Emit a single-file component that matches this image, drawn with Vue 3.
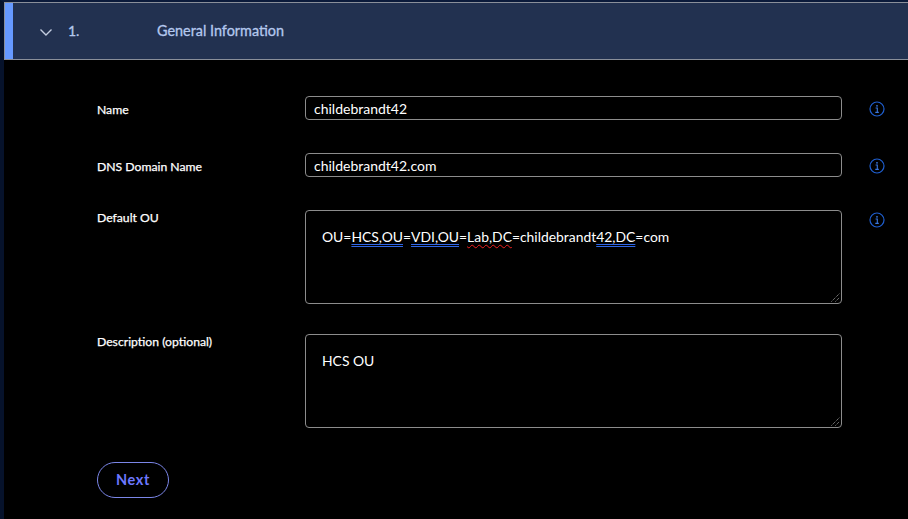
<script setup>
const rows = [
  { label: 'Name', value: 'childebrandt42', info: true },
  { label: 'DNS Domain Name', value: 'childebrandt42.com', info: true },
]
</script>

<template>
  <div class="page">
    <header class="head">
      <div class="accent"></div>
      <svg class="chev" width="14" height="9" viewBox="0 0 14 9"><path d="M1.5 1.5 L7 7 L12.5 1.5" fill="none" stroke="#c3cde0" stroke-width="1.4"/></svg>
      <span class="num">1.</span>
      <span class="title">General Information</span>
    </header>
    <main class="form">
      <div v-for="r in rows" :key="r.label" class="row single">
        <label class="lab">{{ r.label }}</label>
        <input class="inp" :value="r.value" readonly spellcheck="false" />
        <svg class="info" width="16" height="16" viewBox="0 0 16 16"><circle cx="8" cy="8" r="7" fill="none" stroke="#1f5fd0" stroke-width="1.2"/><circle cx="8" cy="4.8" r=".9" fill="#3a78e0"/><path d="M6.6 7H8.3V11.2M6.3 11.4H9.8" fill="none" stroke="#3a78e0" stroke-width="1.1"/></svg>
      </div>
      <div class="row multi ou">
        <label class="lab top">Default OU</label>
        <div class="area">OU=<span class="blue">HCS,OU</span>=<span class="blue">VDI,OU</span>=<span class="red">Lab,DC</span>=childebrandt<span class="blue">42,DC</span>=com
          <svg class="grip" width="9" height="9" viewBox="0 0 9 9"><path d="M0.5 8.5 L8.5 .5 M4.5 8.5 L8.5 4.5" stroke="#a0a0a0" stroke-width="1" stroke-dasharray="1 1"/></svg>
        </div>
        <svg class="info" width="16" height="16" viewBox="0 0 16 16"><circle cx="8" cy="8" r="7" fill="none" stroke="#1f5fd0" stroke-width="1.2"/><circle cx="8" cy="4.8" r=".9" fill="#3a78e0"/><path d="M6.6 7H8.3V11.2M6.3 11.4H9.8" fill="none" stroke="#3a78e0" stroke-width="1.1"/></svg>
      </div>
      <div class="row multi desc">
        <label class="lab top">Description (optional)</label>
        <div class="area">HCS OU
          <svg class="grip" width="9" height="9" viewBox="0 0 9 9"><path d="M0.5 8.5 L8.5 .5 M4.5 8.5 L8.5 4.5" stroke="#a0a0a0" stroke-width="1" stroke-dasharray="1 1"/></svg>
        </div>
        <span></span>
      </div>
      <button class="next" type="button">Next</button>
    </main>
  </div>
</template>

<style>
html, body { margin: 0; background: #000; overflow: hidden; }
</style>

<style scoped>
.page {
  width: 908px;
  height: 519px;
  box-sizing: border-box;
  background: #000;
  border-left: 4px solid #06122b;
  border-top: 2px solid #0b1a3a;
  font-family: Lato, "Noto Sans", sans-serif;
  overflow: hidden;
}
.head {
  height: 58px;
  box-sizing: border-box;
  background: #223150;
  border-top: 1px solid #8a8f9a;
  border-bottom: 1px solid #8a8f9a;
  border-left: 1px solid #8a8f9a;
  display: flex;
  align-items: center;
}
.accent { width: 8px; align-self: stretch; background: #6699ff; }
.chev { margin-left: 26px; margin-top: 2px; }
.num { margin-left: 15px; width: 89px; color: #b4c8ee; font-size: 14px; -webkit-text-stroke: .3px #b4c8ee; margin-top: -2px; }
.title { color: #b4c8ee; font-size: 14.4px; -webkit-text-stroke: .3px #b4c8ee; margin-top: -2px; }
.form { padding: 36px 0 0 93px; }
.row { display: grid; grid-template-columns: 208px 537px 16px; column-gap: 0; }
.row .info { margin-left: 27px; margin-top: 2px; }
.single { height: 24px; margin-bottom: 33px; align-items: center; }
.multi { height: 94px; }
.ou { margin-bottom: 30px; }
.desc { margin-bottom: 34px; }
.lab { color: #fff; font-size: 12.2px; -webkit-text-stroke: .25px #fff; margin-top: 2px; }
.lab.top { margin-top: 0; }
.inp {
  box-sizing: border-box;
  width: 537px;
  height: 24px;
  background: #000;
  border: 1px solid #8c8c8c;
  border-radius: 4px;
  color: #fff;
  font: 14px Lato, "Noto Sans", sans-serif;
  padding: 1px 8px 0;
  outline: none;
}
.area {
  position: relative;
  box-sizing: border-box;
  width: 537px;
  height: 94px;
  background: #000;
  border: 1px solid #8c8c8c;
  border-radius: 4px;
  color: #fff;
  font-size: 13.9px;
  line-height: 20px;
  padding: 16px 16px;
}
.ou .info { margin-top: 2px; }
.blue { text-decoration: underline double #2f66e6 1px; text-underline-offset: 2px; }
.red { text-decoration: underline wavy #f02020 1.2px; text-underline-offset: 2px; }
.grip { position: absolute; right: 1px; bottom: 1px; }
.next {
  display: block;
  width: 72px;
  height: 36px;
  box-sizing: border-box;
  background: transparent;
  border: 1px solid #7b86e8;
  border-radius: 18px;
  color: #6d78ff;
  font: 700 14.5px Lato, "Noto Sans", sans-serif;
  letter-spacing: .6px;
  padding: 0 0 2px;
}
</style>
